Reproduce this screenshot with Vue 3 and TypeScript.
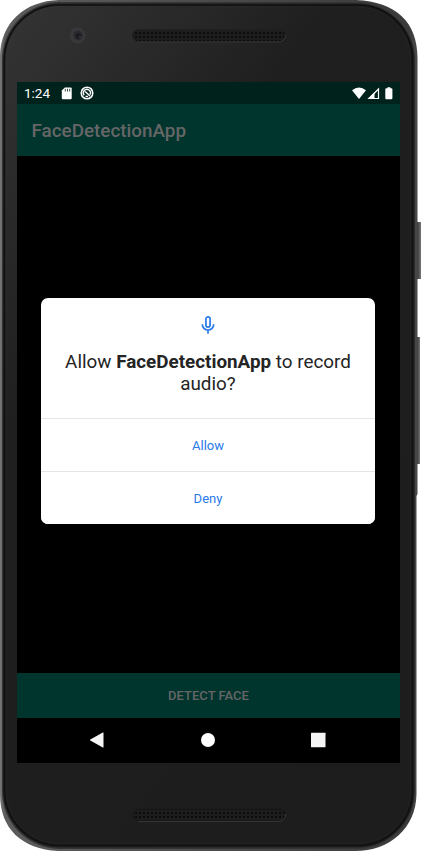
<script setup lang="ts">
const choices: string[] = ['Allow', 'Deny']
</script>

<template>
  <main class="device">
    <svg class="shell" viewBox="0 0 421 851" aria-hidden="true">
      <defs>
        <linearGradient id="rim" x1="0" y1="0" x2="1" y2="0">
          <stop offset="0" stop-color="#777777" />
          <stop offset="0.012" stop-color="#5c5c5c" />
          <stop offset="0.2" stop-color="#575757" />
          <stop offset="0.6" stop-color="#484848" />
          <stop offset="0.98" stop-color="#3c3b3c" />
          <stop offset="1" stop-color="#4a494a" />
        </linearGradient>
        <linearGradient id="face" x1="0" y1="0" x2="0.65" y2="1">
          <stop offset="0" stop-color="#343435" />
          <stop offset="0.18" stop-color="#2a2a2a" />
          <stop offset="0.36" stop-color="#1f1f1f" />
          <stop offset="1" stop-color="#1d1d1d" />
        </linearGradient>
        <linearGradient id="key" x1="0" y1="0" x2="1" y2="0">
          <stop offset="0" stop-color="#343334" />
          <stop offset="1" stop-color="#777677" />
        </linearGradient>
        <pattern id="mesh" x="134" y="31" width="4" height="4" patternUnits="userSpaceOnUse">
          <rect width="4" height="4" fill="#1d1d1d" />
          <rect x="1" y="1" width="2" height="2" fill="#0c0c0c" />
        </pattern>
      </defs>
      <rect x="417" y="222" width="4" height="57" fill="url(#key)" />
      <rect x="417" y="337" width="3" height="127" fill="url(#key)" />
      <path d="M59 0H356C396 2 417.500 22 417.500 58V494L416.500 496V794C416 828 390 851 355 851H58C22 849 0 829 0 794V56C1 22 25 1 59 0Z" fill="url(#rim)" />
      <rect x="2" y="2" width="413" height="847" rx="58" fill="#353535" />
      <rect x="3" y="3.500" width="411.500" height="844" rx="57" fill="#202020" />
      <rect x="4.500" y="5" width="408" height="840.500" rx="55" fill="url(#face)" stroke="#101010" stroke-width="1.500" />
      <rect x="6.500" y="7" width="404" height="836.500" rx="53" fill="none" stroke="#444" stroke-opacity=".1" />
      <circle cx="77.500" cy="35.500" r="8" fill="#38383a" />
      <circle cx="78" cy="35.500" r="4.700" fill="#29282c" />
      <circle cx="78.500" cy="36" r="2.700" fill="#1b1922" />
      <circle cx="80" cy="37" r=".8" fill="#684b5b" />
      <rect x="132.500" y="29.500" width="153" height="12" rx="6" fill="url(#mesh)" stroke="#202020" />
      <path d="M138 42H279Q285.500 41 285.500 35" fill="none" stroke="#373737" stroke-width=".8" />
      <rect x="132.500" y="809" width="153" height="11.500" rx="5.750" fill="url(#mesh)" stroke="#181818" />
      <path d="M138 821.500H279Q285.500 820.500 285.500 814" fill="none" stroke="#343434" />
    </svg>

    <section class="screen">
      <header class="status">
        <span class="time">1:24</span>
        <svg class="sd" viewBox="0 0 12 13" aria-hidden="true">
          <path d="M3.800 .5H9.600Q10.700.5 10.700 1.600V11.300Q10.700 12.300 9.600 12.300H1.900Q.8 12.300.8 11.300V3.500Z" fill="#fff" />
          <path d="M4.300 1.800V4.500M6.500 1.800V4.500M8.700 1.800V4.500" stroke="#00221d" stroke-width=".8" />
        </svg>
        <svg class="sync" viewBox="0 0 14 14" aria-hidden="true">
          <circle cx="7" cy="7" r="5.800" fill="none" stroke="#fff" stroke-width="1.500" />
          <path d="M4.200 9.300A3.600 3.600 0 1 1 10.200 8.500M5.200 5.600L10 10M5.600 10.100A3.500 3.500 0 0 0 8 10.400" fill="none" stroke="#fff" stroke-width="1.400" />
        </svg>
        <svg class="indicators" viewBox="0 0 42 13" aria-hidden="true">
          <path d="M0 3.200Q7-2.200 14 3.200L7 12Z" fill="#fff" />
          <path d="M17 11.500L26.500 2V11.500Z" fill="none" stroke="#fff" stroke-width="1.200" />
          <path d="M15.600 12L22.500 5.200V12Z" fill="#fff" />
          <path d="M34.400 1.200H35.500V.2H38.300V1.200H39.300Q40.400 1.200 40.400 2.200V11.300Q40.400 12.300 39.300 12.300H34.400Q33.300 12.300 33.300 11.300V2.200Q33.300 1.200 34.400 1.200Z" fill="#fff" />
        </svg>
      </header>
      <h1 class="appbar">FaceDetectionApp</h1>

      <div class="viewport">
        <section class="dialog" role="dialog" aria-labelledby="permission-title">
          <div class="message">
            <svg class="mic" viewBox="0 0 14 18" aria-hidden="true">
              <rect x="4.900" y=".9" width="4.200" height="10.200" rx="2.100" fill="none" stroke="#2979e8" stroke-width="1.700" />
              <path d="M1.300 8.300A5.700 5.700 0 0 0 12.700 8.300M7 14V17.800" fill="none" stroke="#2979e8" stroke-width="1.700" />
            </svg>
            <h2 id="permission-title">Allow <strong>FaceDetectionApp</strong> to record<br>audio?</h2>
          </div>
          <button v-for="choice in choices" :key="choice" class="choice" type="button">{{ choice }}</button>
        </section>
      </div>

      <button class="detect" type="button">DETECT FACE</button>
      <nav class="navigation">
        <svg viewBox="0 0 16 18" aria-hidden="true"><path d="M14.500 1.800V16.200Q14.500 16.800 13.800 16.400L1.300 9.600Q.5 9 1.300 8.400L13.800 1.600Q14.500 1.200 14.500 1.800Z" fill="#f5f5f5" /></svg>
        <svg viewBox="0 0 16 18" aria-hidden="true"><circle cx="8" cy="9" r="7" fill="#fff" /></svg>
        <svg viewBox="0 0 16 18" aria-hidden="true"><rect x="1" y="1.800" width="14.500" height="14.400" rx=".5" fill="#f5f5f5" /></svg>
      </nav>
    </section>
  </main>
</template>

<style>
body {
  margin: 0;
  background: #fff;
}
</style>

<style scoped>
.device {
  position: relative;
  box-sizing: border-box;
  width: 421px;
  height: 851px;
  padding: 82px 21px 88px 17px;
  overflow: hidden;
  font-family: Roboto, sans-serif;
}

.shell {
  position: absolute;
  inset: 0;
  width: 100%;
  height: 100%;
}

.screen {
  position: relative;
  display: flex;
  flex-direction: column;
  width: 383px;
  height: 681px;
  background: #000;
}

.status {
  box-sizing: border-box;
  display: flex;
  align-items: center;
  height: 22px;
  padding: 0 6px 0 7px;
  background: #00221d;
  color: #fff;
}

.time {
  width: 36.5px;
  font-size: 13.5px;
  line-height: 22px;
}

.sd {
  width: 12px;
  height: 13px;
  margin-right: 7.5px;
}

.sync {
  width: 14px;
  height: 14px;
}

.indicators {
  width: 42px;
  height: 13px;
  margin-left: auto;
}

.appbar {
  box-sizing: border-box;
  height: 52px;
  margin: 0;
  padding-left: 14.5px;
  background: #00352e;
  color: #666;
  font-size: 18.85px;
  font-weight: 500;
  line-height: 54px;
}

.viewport {
  box-sizing: border-box;
  display: flex;
  justify-content: center;
  height: 517px;
  padding-top: 142px;
}

.dialog {
  width: 334px;
  height: 226px;
  margin-right: 1px;
  border-radius: 7px;
  background: #fff;
  overflow: hidden;
}

.message {
  box-sizing: border-box;
  display: flex;
  flex-direction: column;
  align-items: center;
  height: 120px;
  padding-top: 18px;
}

.mic {
  width: 14px;
  height: 18px;
}

h2 {
  margin: 17px 0 0;
  color: #242424;
  font-size: 18.85px;
  font-weight: 400;
  line-height: 22px;
  text-align: center;
}

strong {
  font-weight: 700;
}

.choice {
  display: block;
  box-sizing: border-box;
  width: 100%;
  height: 53px;
  padding: 1px 0 0;
  border: 0;
  border-top: 1px solid #e5e5e5;
  background: #fff;
  color: #2979e8;
  font: 400 13px/50px Roboto, sans-serif;
}

.detect {
  height: 45px;
  padding: 1px 0 0;
  border: 0;
  background: #00352e;
  color: #666;
  font: 500 13px/44px Roboto, sans-serif;
}

.navigation {
  box-sizing: border-box;
  display: flex;
  align-items: center;
  justify-content: space-between;
  height: 45px;
  padding: 0 74px 1px 72px;
}

.navigation svg {
  width: 16px;
  height: 18px;
}
</style>
